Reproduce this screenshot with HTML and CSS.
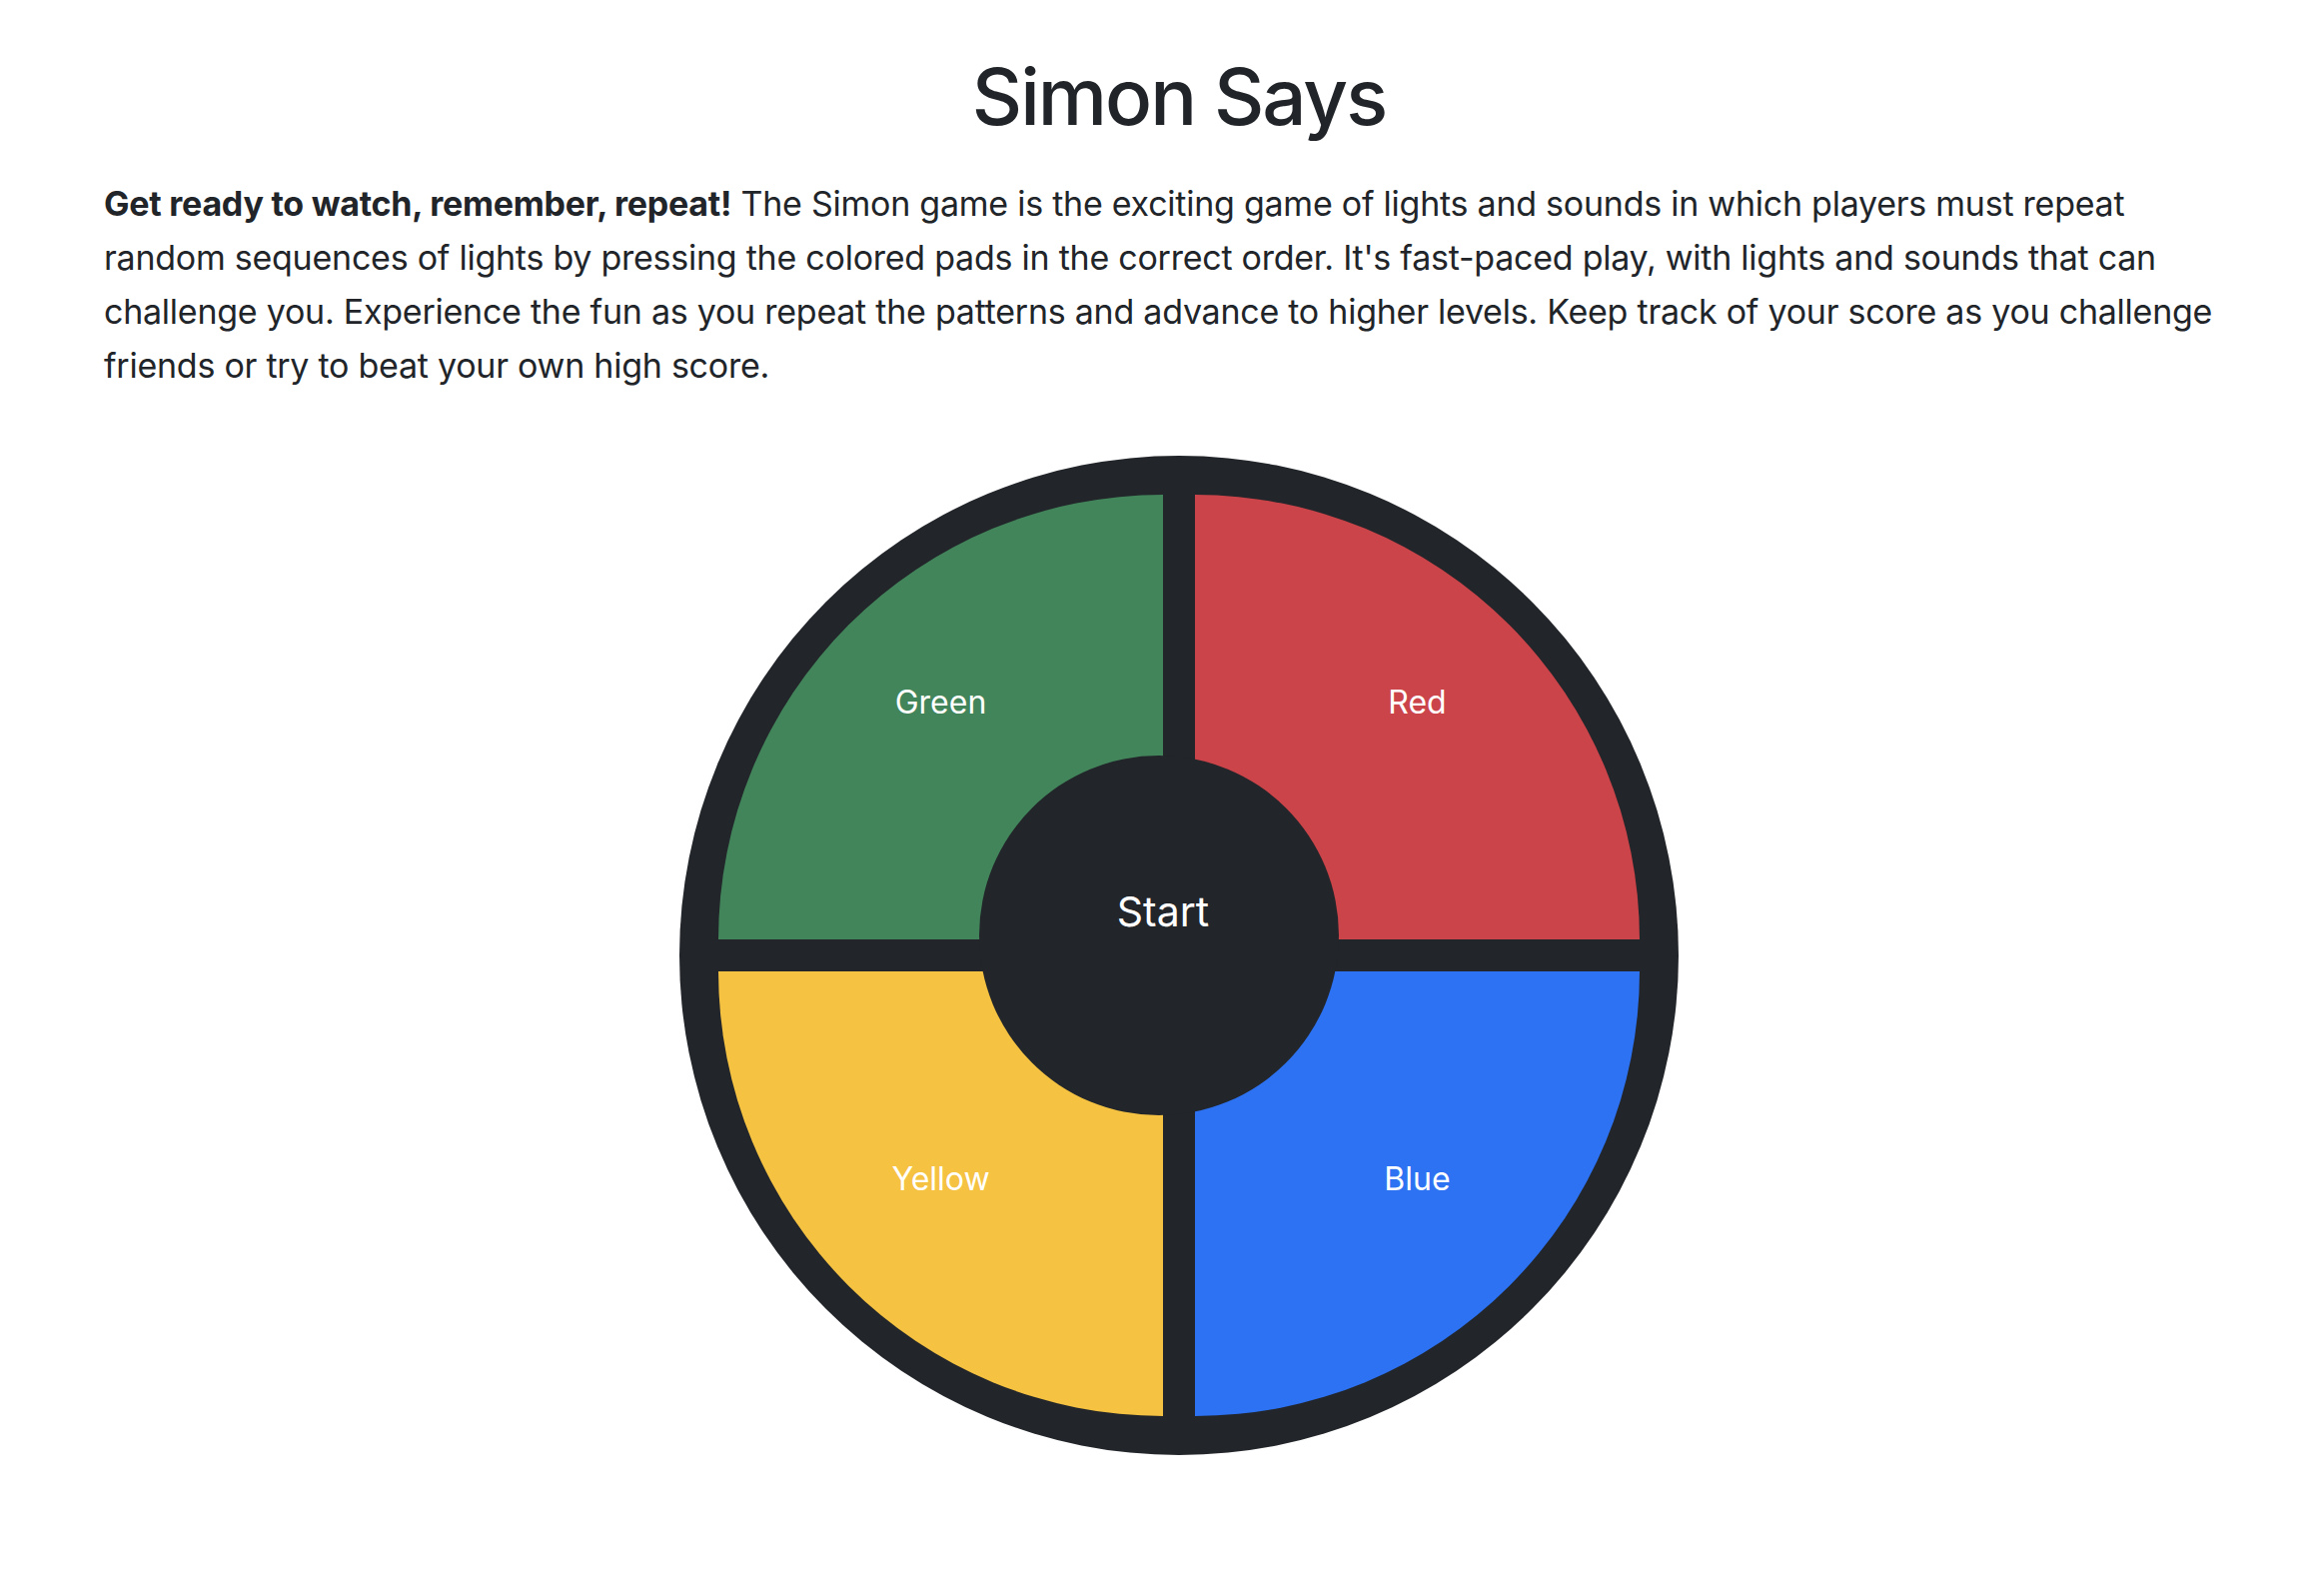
FILE: index.html
```html
<!DOCTYPE html>
<html lang="en">
<head>
<meta charset="utf-8">
<title>Simon Says</title>
<link rel="stylesheet" href="styles.css">
</head>
<body>
<main class="page">
  <h1 class="title">Simon Says</h1>
  <p class="intro"><strong>Get ready to watch, remember, repeat!</strong> The Simon game is the exciting game of lights and sounds in which players must repeat random sequences of lights by pressing the colored pads in the correct order. It's fast-paced play, with lights and sounds that can challenge you. Experience the fun as you repeat the patterns and advance to higher levels. Keep track of your score as you challenge friends or try to beat your own high score.</p>
  <div class="board">
    <button class="pad pad-green" type="button"><span class="pad-label">Green</span></button>
    <button class="pad pad-red" type="button"><span class="pad-label">Red</span></button>
    <button class="pad pad-yellow" type="button"><span class="pad-label">Yellow</span></button>
    <button class="pad pad-blue" type="button"><span class="pad-label">Blue</span></button>
    <button class="start" type="button">Start</button>
  </div>
</main>
</body>
</html>
```

FILE: styles.css
```css
html, body {
  margin: 0;
  padding: 0;
  background: #ffffff;
}

body {
  color: #212529;
  font-family: Inter, "Liberation Sans", sans-serif;
}

.page {
  box-sizing: border-box;
  width: 2326px;
  padding: 49px 70px 120px 104px;
}

.title {
  margin: 0 0 32px;
  font-size: 78px;
  line-height: 96px;
  font-weight: 500;
  text-align: center;
  letter-spacing: -2px;
}

.intro {
  max-width: 2140px;
  margin: 0 0 63px;
  font-size: 34px;
  line-height: 54px;
  font-weight: 400;
  letter-spacing: -0.25px;
}

.intro strong {
  font-weight: 700;
}

.board {
  position: relative;
  box-sizing: border-box;
  width: 1000px;
  height: 1000px;
  margin: 0 auto;
  padding: 39px;
  border-radius: 50%;
  background: #222529;
  display: grid;
  grid-template-columns: 445px 445px;
  grid-template-rows: 445px 445px;
  gap: 32px;
}

.pad {
  border: 0;
  margin: 0;
  padding: 0 0 30px;
  display: flex;
  align-items: center;
  justify-content: center;
  color: #ffffff;
  font-family: Inter, "Liberation Sans", sans-serif;
  font-size: 32px;
  font-weight: 400;
  cursor: pointer;
}

.pad-green {
  background: #42855b;
  border-top-left-radius: 100%;
}

.pad-red {
  background: #cb444a;
  border-top-right-radius: 100%;
}

.pad-yellow {
  background: #f5c242;
  border-bottom-left-radius: 100%;
}

.pad-blue {
  background: #2c72f2;
  border-bottom-right-radius: 100%;
}

.start {
  position: absolute;
  left: 300px;
  top: 300px;
  width: 360px;
  height: 360px;
  box-sizing: border-box;
  border: 0;
  margin: 0;
  padding: 0 0 48px 8px;
  border-radius: 50%;
  background: #222529;
  color: #ffffff;
  font-family: Inter, "Liberation Sans", sans-serif;
  font-size: 41px;
  font-weight: 400;
  display: flex;
  align-items: center;
  justify-content: center;
  cursor: pointer;
}
```
